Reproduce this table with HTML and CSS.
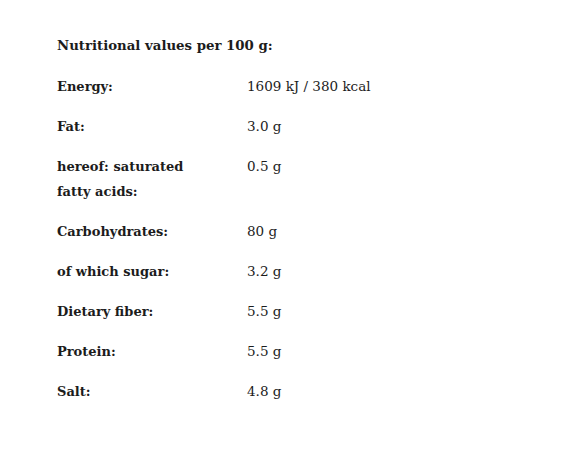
FILE: index.html
```html
<!DOCTYPE html>
<html lang="en">
  <head>
    <meta charset="UTF-8" />
    <meta name="viewport" content="width=device-width, initial-scale=1.0" />
    <title>Nutritional values</title>
    <link rel="stylesheet" href="styles.css">
  </head>
  <body>
    <div class="nutrition">
      <h2 class="nutrition-title">Nutritional values per 100 g:</h2>
      <div class="nutrition-table">
        <div class="label">Energy:</div>
        <div class="value">1609 kJ / 380 kcal</div>
        <div class="label">Fat:</div>
        <div class="value">3.0 g</div>
        <div class="label">hereof: saturated<br />fatty acids:</div>
        <div class="value">0.5 g</div>
        <div class="label">Carbohydrates:</div>
        <div class="value">80 g</div>
        <div class="label">of which sugar:</div>
        <div class="value">3.2 g</div>
        <div class="label">Dietary fiber:</div>
        <div class="value">5.5 g</div>
        <div class="label">Protein:</div>
        <div class="value">5.5 g</div>
        <div class="label">Salt:</div>
        <div class="value">4.8 g</div>
      </div>
    </div>
  </body>
</html>
```

FILE: styles.css
```css
* {
  box-sizing: border-box;
  margin: 0;
  padding: 0;
}

body {
  background-color: white;
  color: #1c1c1c;
  font-family: "DejaVu Serif", "Liberation Serif", serif;
  font-size: 13.5px;
  line-height: 25px;
}

.nutrition {
  padding: 33px 57px;
}

.nutrition-title {
  font-size: 13.3px;
  font-weight: bold;
  margin-bottom: 16px;
}

.nutrition-table {
  display: grid;
  grid-template-columns: 190px auto;
  row-gap: 15px;
}

.label {
  font-size: 13px;
  font-weight: bold;
}

.value {
  font-variant-numeric: oldstyle-nums;
}
```
